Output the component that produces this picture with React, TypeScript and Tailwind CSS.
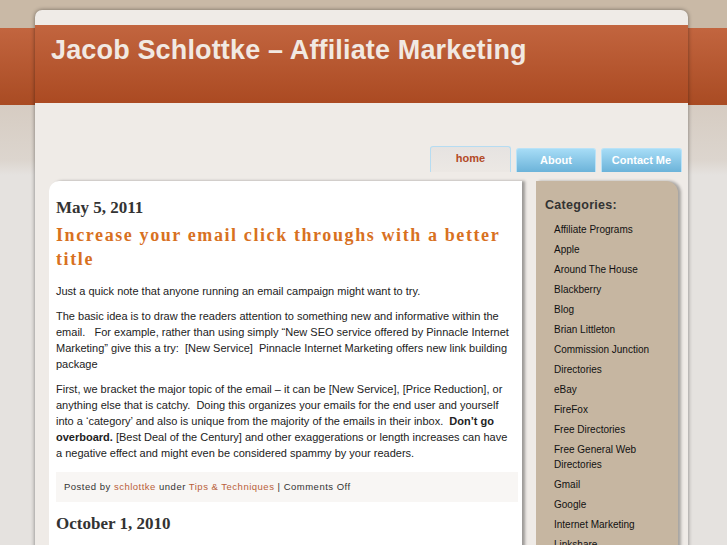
import React from 'react';

const categories = [
  'Affiliate Programs',
  'Apple',
  'Around The House',
  'Blackberry',
  'Blog',
  'Brian Littleton',
  'Commission Junction',
  'Directories',
  'eBay',
  'FireFox',
  'Free Directories',
  'Free General Web Directories',
  'Gmail',
  'Google',
  'Internet Marketing',
  'Linkshare',
];

const Tabs: React.FC = () => (
  <div className="flex items-end justify-end gap-[5px] pr-[6px]">
    <a className="flex h-[26px] w-[81px] items-center justify-center rounded-t-[3px] border border-b-0 border-[#b6dcf2] bg-[linear-gradient(to_bottom,#e6e3e1,#ece8e4)] pb-[2px] text-[11px] font-bold text-[#b34a27]">
      home
    </a>
    <a className="flex h-[24px] w-[80px] items-center justify-center rounded-t-[3px] border border-b-0 border-[#b9e2f7] bg-[linear-gradient(to_bottom,#a6dcf6,#6cb3d9)] text-[11px] font-bold text-white">
      About
    </a>
    <a className="flex h-[24px] w-[81px] items-center justify-center rounded-t-[3px] border border-b-0 border-[#b9e2f7] bg-[linear-gradient(to_bottom,#a6dcf6,#6cb3d9)] text-[11px] font-bold text-white">
      Contact Me
    </a>
  </div>
);

const Post: React.FC = () => (
  <div className="min-h-[400px] rounded-tl-[10px] bg-white pl-[7px] pr-[8px] pt-[16px] shadow-[3px_0_3px_rgba(0,0,0,0.35)]">
    <h2 className="font-['Liberation_Serif',serif] text-[17px] font-bold leading-[22px] text-[#333]">May 5, 2011</h2>
    <h1 className="mt-[4px] font-['Liberation_Serif',serif] text-[18px] font-bold leading-[24px] tracking-[1.6px] text-[#d8711f]">
      Increase your email click throughs with a better title
    </h1>
    <div className="mt-[12px] text-[11px] leading-[16px] text-[#222]">
      <p>Just a quick note that anyone running an email campaign might want to try.</p>
      <p className="mt-[9px]">
        The basic idea is to draw the readers attention to something new and informative within the email.&nbsp;&nbsp; For
        example, rather than using simply “New SEO service offered by Pinnacle Internet Marketing” give this a try:&nbsp; [New
        Service]&nbsp; Pinnacle Internet Marketing offers new link building package
      </p>
      <p className="mt-[9px]">
        First, we bracket the major topic of the email – it can be [New Service], [Price Reduction], or anything else that
        is catchy.&nbsp; Doing this organizes your emails for the end user and yourself into a ‘category’ and also is unique
        from the majority of the emails in their inbox.&nbsp; <b>Don’t go overboard.</b> [Best Deal of the Century] and
        other exaggerations or length increases can have a negative effect and might even be considered spammy by your
        readers.
      </p>
    </div>
    <div className="-mr-[4px] mt-[11px] bg-[#f8f6f4] px-[8px] py-[8px] text-[9.5px] leading-[14px] tracking-[0.5px] text-[#333]">
      Posted by <a className="text-[#b8613b]">schlottke</a> under <a className="text-[#b8613b]">Tips &amp; Techniques</a> |
      Comments Off
    </div>
    <h2 className="mt-[11px] font-['Liberation_Serif',serif] text-[17px] font-bold leading-[22px] text-[#333]">
      October 1, 2010
    </h2>
  </div>
);

const Sidebar: React.FC = () => (
  <div className="min-h-[400px] rounded-tr-[12px] bg-[#c6b6a1] pl-[9px] pr-[4px] pt-[16px] shadow-[3px_0_3px_rgba(0,0,0,0.3)]">
    <h3 className="text-[12.5px] font-bold leading-[16px] tracking-[0.3px] text-[#333]">Categories:</h3>
    <ul className="mt-[6px] pl-[9px] text-[10px] leading-[15px] text-[#111]">
      {categories.map((c) => (
        <li key={c} className="py-[2.5px]">
          {c}
        </li>
      ))}
    </ul>
  </div>
);

export default function App() {
  return (
    <div className="h-[545px] overflow-hidden bg-[linear-gradient(to_bottom,#c9b9a6_0px,#c9b9a6_28px,#c2653f_28px,#a94b23_105px,#d6ccc2_105px,#dcd5ce_160px,#e5e2df_175px,#e5e2df_100%)] pt-[10px] font-['Liberation_Sans',Arial,sans-serif]">
      <div className="ml-[35px] w-[653px] rounded-t-[7px] bg-[#efebe7] pt-[15px] shadow-[0_0_4px_rgba(0,0,0,0.45)]">
        <div className="h-[78px] bg-[linear-gradient(to_bottom,#c2653f,#ab4a22)] pl-[16px] pt-[10px]">
          <h1 className="text-[27px] font-bold leading-[30px] tracking-[0.15px] text-[#f1e9e2]">
            Jacob Schlottke – Affiliate Marketing
          </h1>
        </div>
        <div className="h-[78px] pt-[43px]">
          <Tabs />
        </div>
        <div className="flex gap-[14px] pl-[14px] pr-[10px]">
          <div className="w-[473px]">
            <Post />
          </div>
          <div className="w-[142px]">
            <Sidebar />
          </div>
        </div>
      </div>
    </div>
  );
}
